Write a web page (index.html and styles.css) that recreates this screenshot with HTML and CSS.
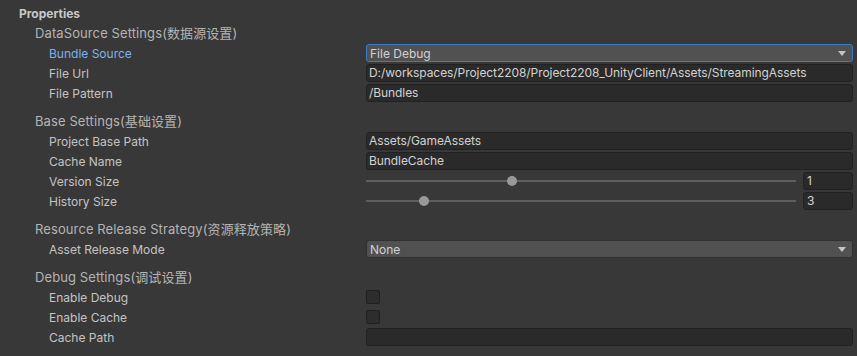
FILE: index.html
```html
<!DOCTYPE html>
<html lang="en">
<head>
    <meta charset="UTF-8">
    <meta name="viewport" content="width=device-width, initial-scale=1.0">
    <title>Properties</title>
    <link rel="stylesheet" href="styles.css">
</head>
<body>
    <div class="inspector">
        <div class="title">Properties</div>

        <div class="group first">
            <div class="group-header">DataSource Settings(数据源设置)</div>
            <div class="row">
                <label class="active">Bundle Source</label>
                <div class="dropdown focused"><span>File Debug</span><i class="arrow"></i></div>
            </div>
            <div class="row">
                <label>File Url</label>
                <div class="field">D:/workspaces/Project2208/Project2208_UnityClient/Assets/StreamingAssets</div>
            </div>
            <div class="row">
                <label>File Pattern</label>
                <div class="field">/Bundles</div>
            </div>
        </div>

        <div class="group">
            <div class="group-header">Base Settings(基础设置)</div>
            <div class="row">
                <label>Project Base Path</label>
                <div class="field">Assets/GameAssets</div>
            </div>
            <div class="row">
                <label>Cache Name</label>
                <div class="field">BundleCache</div>
            </div>
            <div class="row">
                <label>Version Size</label>
                <div class="slider">
                    <div class="track"><span class="knob" style="left: 34%"></span></div>
                    <div class="field number">1</div>
                </div>
            </div>
            <div class="row">
                <label>History Size</label>
                <div class="slider">
                    <div class="track"><span class="knob" style="left: 13.5%"></span></div>
                    <div class="field number">3</div>
                </div>
            </div>
        </div>

        <div class="group">
            <div class="group-header">Resource Release Strategy(资源释放策略)</div>
            <div class="row">
                <label>Asset Release Mode</label>
                <div class="dropdown"><span>None</span><i class="arrow"></i></div>
            </div>
        </div>

        <div class="group">
            <div class="group-header">Debug Settings(调试设置)</div>
            <div class="row">
                <label>Enable Debug</label>
                <div><span class="checkbox"></span></div>
            </div>
            <div class="row">
                <label>Enable Cache</label>
                <div><span class="checkbox"></span></div>
            </div>
            <div class="row">
                <label>Cache Path</label>
                <div class="field"></div>
            </div>
        </div>
    </div>
</body>
</html>
```

FILE: styles.css
```css
body {
    margin: 0;
    background-color: #383838;
    font-family: Inter, "Noto Sans CJK SC", sans-serif;
    font-size: 12px;
    color: #c4c4c4;
}
.inspector {
    padding: 4px 4px 0 19px;
}
.title {
    height: 19px;
    line-height: 19px;
    font-weight: bold;
    color: #c8c8c8;
}
.group {
    margin-top: 8px;
    padding-left: 16px;
}
.group.first {
    margin-top: 0;
}
.group-header {
    height: 20px;
    line-height: 20px;
    font-size: 13px;
    color: #b4b4b4;
    letter-spacing: 0.1px;
}
.row {
    display: grid;
    grid-template-columns: 317px 1fr;
    align-items: center;
    height: 20px;
    padding-left: 14px;
}
.row label {
    white-space: nowrap;
}
.row label.active {
    color: #7fb0f2;
}
.field {
    height: 16px;
    line-height: 16px;
    padding: 0 3px 0 2px;
    background: #2a2a2a;
    border: 1px solid #212121;
    border-radius: 3px;
    color: #d2d2d2;
    letter-spacing: -0.07px;
    white-space: nowrap;
    overflow: hidden;
}
.dropdown {
    display: flex;
    align-items: center;
    justify-content: space-between;
    height: 16px;
    padding: 0 6px 0 3px;
    background: #515151;
    border: 1px solid #303030;
    border-radius: 3px;
    color: #d2d2d2;
}
.dropdown.focused {
    border-color: #3a7bc4;
}
.arrow {
    width: 0;
    height: 0;
    border-left: 4px solid transparent;
    border-right: 4px solid transparent;
    border-top: 5px solid #c4c4c4;
}
.slider {
    display: grid;
    grid-template-columns: 1fr 50px;
    gap: 7px;
    align-items: center;
}
.track {
    position: relative;
    height: 2px;
    background: #5e5e5e;
}
.knob {
    position: absolute;
    top: -4px;
    width: 10px;
    height: 10px;
    margin-left: -5px;
    border-radius: 50%;
    background: #999999;
}
.number {
    padding-left: 3px;
}
.checkbox {
    display: block;
    width: 12px;
    height: 12px;
    background: #2d2d2d;
    border: 1px solid #1f1f1f;
    border-radius: 2px;
}
```
